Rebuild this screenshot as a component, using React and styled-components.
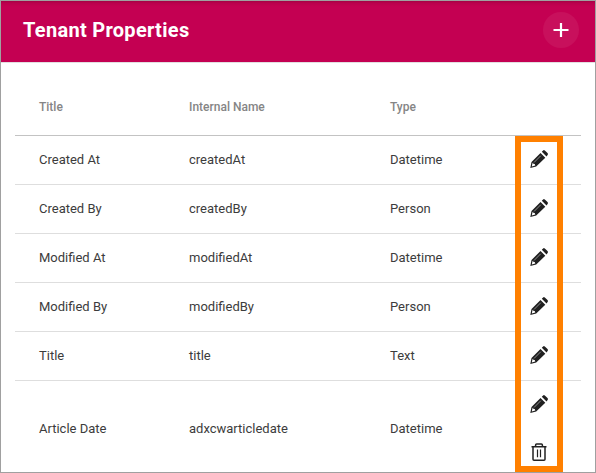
import React from "react";
import styled, { createGlobalStyle } from "styled-components";

const GlobalStyle = createGlobalStyle`
  * { box-sizing: border-box; }
  body { margin: 0; overflow: hidden; font-family: Roboto, sans-serif; background: #fff; }
`;

const Window = styled.main`
  position: relative;
  width: 596px;
  height: 473px;
  overflow: hidden;
  border: 1px solid #a0a0a0;
  background: #fff;
`;

const Header = styled.header`
  display: flex;
  align-items: center;
  justify-content: space-between;
  height: 62px;
  padding: 0 16px 3px 22px;
  color: #fff;
  background: linear-gradient(#a50044 0, #b9004c 2px, #c30050 5px, #c40052 7px);
  border-bottom: 1px solid #e2dfe0;
`;

const Heading = styled.h1`
  margin: 0;
  font-size: 20px;
  font-weight: 700;
  line-height: 24px;
  letter-spacing: 0.3px;
`;

const AddButton = styled.button`
  display: grid;
  place-items: center;
  width: 36px;
  height: 36px;
  padding: 0;
  border: 0;
  border-radius: 50%;
  color: #fff;
  background: #c8105c;
`;

const Table = styled.div`
  width: 566px;
  margin-left: 14px;
`;

const Row = styled.div`
  display: grid;
  grid-template-columns: 150px 201px 125px 48px;
  align-items: center;
  height: ${(p) => p.$height || 49}px;
  padding-left: 24px;
  border-bottom: 1px solid #dedede;
  color: #3c3c3c;
  font-size: 13px;
`;

const HeadRow = styled(Row)`
  height: 73px;
  padding-top: 15px;
  border-bottom-color: #c3c3c3;
  color: #858585;
  font-size: 12px;
  font-weight: 500;
`;

const Cell = styled.span`
  line-height: 16px;
`;

const Actions = styled.div`
  display: flex;
  flex-direction: column;
  align-items: center;
  gap: 30px;
  padding-bottom: 2px;
`;

const Icon = styled.svg`
  display: block;
  width: 18px;
  height: 18px;
  overflow: visible;
`;

const Highlight = styled.div`
  position: absolute;
  left: 514px;
  top: 135px;
  width: 48px;
  height: 336px;
  border: 6px solid #ff8000;
  pointer-events: none;
`;

const Pencil = () => (
  <Icon viewBox="0 0 18 18" aria-label="Edit">
    <path
      fill="#202020"
      fillRule="evenodd"
      d="M10.5 3 15.3 7.8 6.2 16.6 0.3 18 1.5 12Z M2.6 12.8 1.8 16.4 5.3 15.6 4.7 14.1 3.4 13.7Z"
    />
    <path fill="#202020" d="M11.8 1.8 13.1.5Q13.9-.3 14.8.5L17.5 3.1Q18.5 4 17.6 5L16.5 6.4Z" />
    <path d="M4 12.5 10.8 5.7" stroke="#aaa" strokeWidth="0.8" />
  </Icon>
);

const Trash = () => (
  <Icon viewBox="0 0 18 18" aria-label="Delete" fill="none" stroke="#222" strokeWidth="1.5">
    <path d="M1.5 3.8H16.5M5.6 3.8V2Q5.6.9 6.7.9H11.3Q12.4.9 12.4 2V3.8" />
    <path d="M3 4V16.3Q3 17.3 4 17.3H14Q15 17.3 15 16.3V4" />
    <path d="M7.5 6.5V14.3M10.5 6.5V14.3" strokeWidth="1.2" />
  </Icon>
);

const Plus = () => (
  <Icon viewBox="0 0 18 18" aria-label="Add">
    <path d="M1.5 9H16.5M9 2V16" stroke="#fff" strokeWidth="2.2" />
  </Icon>
);

const properties = [
  ["Created At", "createdAt", "Datetime"],
  ["Created By", "createdBy", "Person"],
  ["Modified At", "modifiedAt", "Datetime"],
  ["Modified By", "modifiedBy", "Person"],
  ["Title", "title", "Text"],
  ["Article Date", "adxcwarticledate", "Datetime", true],
];

export default function App() {
  return (
    <Window>
      <GlobalStyle />
      <Header>
        <Heading>Tenant Properties</Heading>
        <AddButton><Plus /></AddButton>
      </Header>
      <Table>
        <HeadRow>
          <Cell>Title</Cell>
          <Cell>Internal Name</Cell>
          <Cell>Type</Cell>
        </HeadRow>
        {properties.map(([title, name, type, removable]) => (
          <Row key={name} $height={removable ? 97 : 49}>
            <Cell>{title}</Cell>
            <Cell>{name}</Cell>
            <Cell>{type}</Cell>
            <Actions>
              <Pencil />
              {removable && <Trash />}
            </Actions>
          </Row>
        ))}
      </Table>
      <Highlight />
    </Window>
  );
}
